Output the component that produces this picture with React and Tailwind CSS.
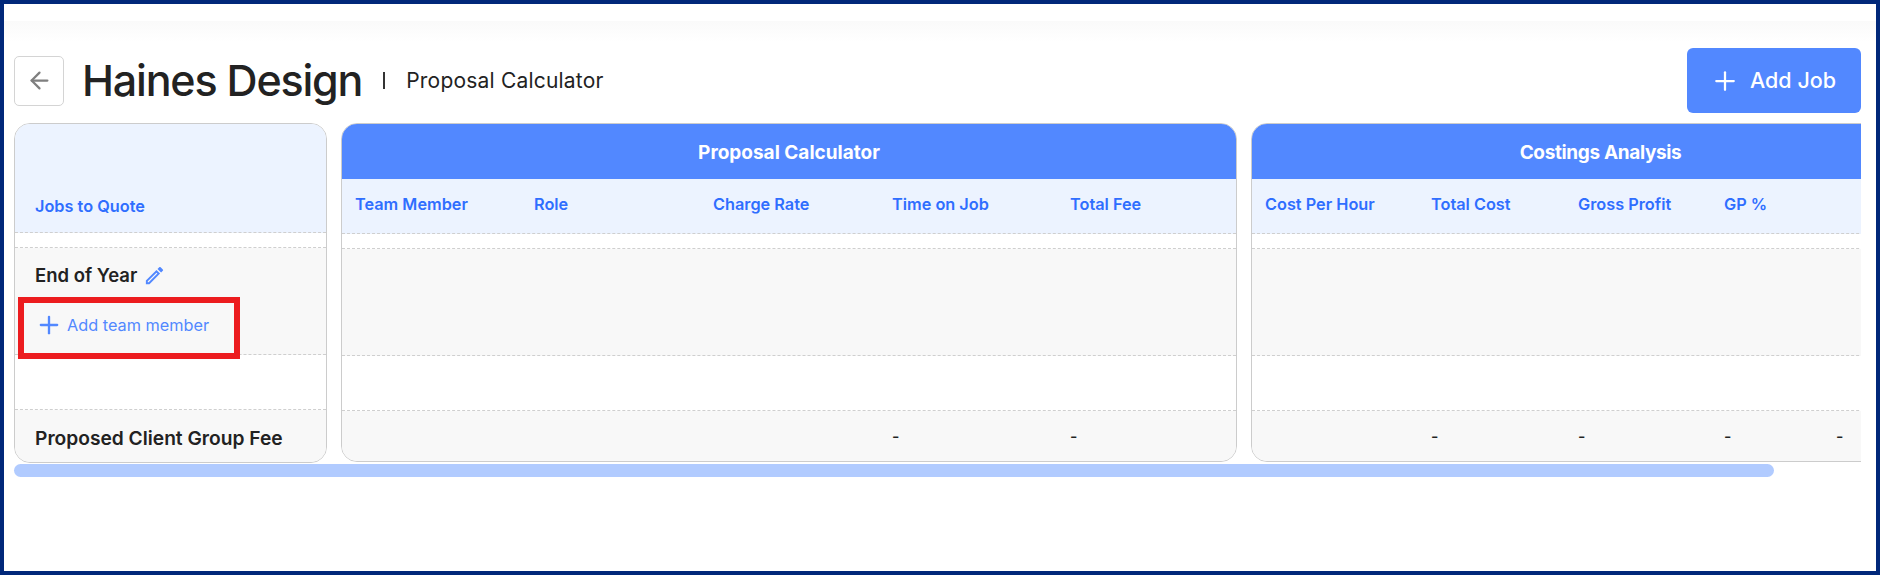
import React from 'react';
import { ArrowLeft, Plus } from 'lucide-react';

const font = { fontFamily: 'Inter, sans-serif' };

const proposalCols = [
  { label: 'Team Member', w: 'w-[179px]' },
  { label: 'Role', w: 'w-[179px]' },
  { label: 'Charge Rate', w: 'w-[179px]' },
  { label: 'Time on Job', w: 'w-[178px]', dash: true },
  { label: 'Total Fee', w: 'w-[165px]', dash: true },
];

const costingCols = [
  { label: 'Cost Per Hour', w: 'w-[166px]' },
  { label: 'Total Cost', w: 'w-[147px]', dash: true },
  { label: 'Gross Profit', w: 'w-[146px]', dash: true },
  { label: 'GP %', w: 'w-[112px]', dash: true },
  { label: '', w: 'w-[114px]', dash: true },
];

const dashed = 'border-b border-dashed border-[#cfcfcf]';

const EditIcon = () => (
  <svg viewBox="0 0 24 24" className="w-[23px] h-[23px] fill-[#5288ff]">
    <path d="M3 17.25V21h3.75L17.81 9.94l-3.75-3.75L3 17.25zM5.92 19H5v-.92l9.06-9.06.92.92L5.92 19zM20.71 5.63l-2.34-2.34c-.2-.2-.45-.29-.71-.29s-.51.1-.7.29l-1.83 1.83 3.75 3.75 1.83-1.83c.39-.39.39-1.02 0-1.41z" />
  </svg>
);

const DataCard = ({ title, titleClass, cols, className }) => (
  <div className={`shrink-0 h-[339px] rounded-[16px] border border-[#cccccc] overflow-hidden flex flex-col ${className}`}>
    <div className={`h-[55px] shrink-0 bg-[#5288ff] flex items-center justify-center pt-[4px] text-white text-[19px] font-bold ${titleClass}`}>{title}</div>
    <div className={`h-[55px] shrink-0 bg-[#ecf3ff] flex items-center pl-[13px] pb-[3px] ${dashed}`}>
      {cols.map((c) => (
        <div key={c.label} className={`${c.w} shrink-0 text-[16.3px] font-semibold text-[#2f6eff] whitespace-nowrap`}>{c.label}</div>
      ))}
    </div>
    <div className={`h-[15px] shrink-0 bg-white ${dashed}`}></div>
    <div className={`h-[107px] shrink-0 bg-[#f8f8f8] ${dashed}`}></div>
    <div className={`h-[55px] shrink-0 bg-white ${dashed}`}></div>
    <div className="flex-1 bg-[#f8f8f8] flex items-start pl-[13px] pt-[14px]">
      {cols.map((c) => (
        <div key={c.label} className={`${c.w} shrink-0 text-[16px] font-medium text-[#222222] leading-[22px]`}>{c.dash ? '-' : ''}</div>
      ))}
    </div>
  </div>
);

export default function App() {
  return (
    <div className="w-[1880px] h-[575px] border-4 border-[#01287a] bg-white overflow-hidden flex flex-col" style={font}>
      <div className="h-[17px] shrink-0"></div>
      <div className="h-[21px] shrink-0 bg-gradient-to-b from-[#fafafa] to-white"></div>

      <div className="mt-[6px] h-[65px] shrink-0 flex items-center pl-[10px] pr-[15px]">
        <button className="w-[50px] h-[50px] flex items-center justify-center rounded-[5px] border border-[#d4d4d4] bg-white text-[#7f7f7f]">
          <ArrowLeft size={27} strokeWidth={2} />
        </button>
        <h1 className="ml-[18px] text-[43px] font-medium text-[#222222] tracking-[-1.2px] leading-none">Haines Design</h1>
        <span className="ml-[21px] w-[2px] h-[17px] bg-[#333333]"></span>
        <span className="ml-[21px] text-[21px] text-[#222222] tracking-[0.2px]">Proposal Calculator</span>
        <button className="ml-auto w-[174px] h-[65px] rounded-[6px] bg-[#5288ff] text-white flex items-center pl-[23px] gap-[10px] text-[21.5px] font-medium">
          <Plus size={30} strokeWidth={1.8} />
          Add Job
        </button>
      </div>

      <div className="mt-[10px] ml-[10px] w-[1847px] overflow-hidden flex items-start gap-[14px]">
        <div className="relative shrink-0 w-[313px] h-[340px] rounded-[16px] border border-[#cccccc] overflow-hidden flex flex-col">
          <div className={`h-[109px] shrink-0 bg-[#ecf3ff] flex items-end pl-[20px] pb-[14px] text-[16.3px] font-semibold text-[#2f6eff] ${dashed}`}>Jobs to Quote</div>
          <div className={`h-[15px] shrink-0 bg-white ${dashed}`}></div>
          <div className={`h-[107px] shrink-0 bg-[#f8f8f8] pl-[20px] ${dashed}`}>
            <div className="mt-[15px] flex items-center gap-[6px] text-[18.5px] font-semibold text-[#222222] leading-[24px]">
              End of Year
              <EditIcon />
            </div>
            <div className="mt-[24px] flex items-center gap-[4px] text-[16.3px] text-[#5288ff] leading-[24px]">
              <Plus size={28} strokeWidth={2} />
              Add team member
            </div>
          </div>
          <div className={`h-[55px] shrink-0 bg-white ${dashed}`}></div>
          <div className="flex-1 bg-[#f8f8f8] pl-[20px] pt-[16px] text-[19.2px] font-semibold text-[#222222] leading-[24px]">Proposed Client Group Fee</div>
          <div className="absolute left-[3px] top-[173px] w-[222px] h-[62px] border-[6px] border-[#ec1c1f]"></div>
        </div>

        <DataCard title="Proposal Calculator" titleClass="" cols={proposalCols} className="w-[896px]" />
        <DataCard title="Costings Analysis" titleClass="tracking-[-0.35px]" cols={costingCols} className="w-[699px]" />
      </div>

      <div className="mt-[1px] ml-[10px] w-[1760px] h-[13px] shrink-0 rounded-[7px] bg-[#b1cbff]"></div>
    </div>
  );
}
